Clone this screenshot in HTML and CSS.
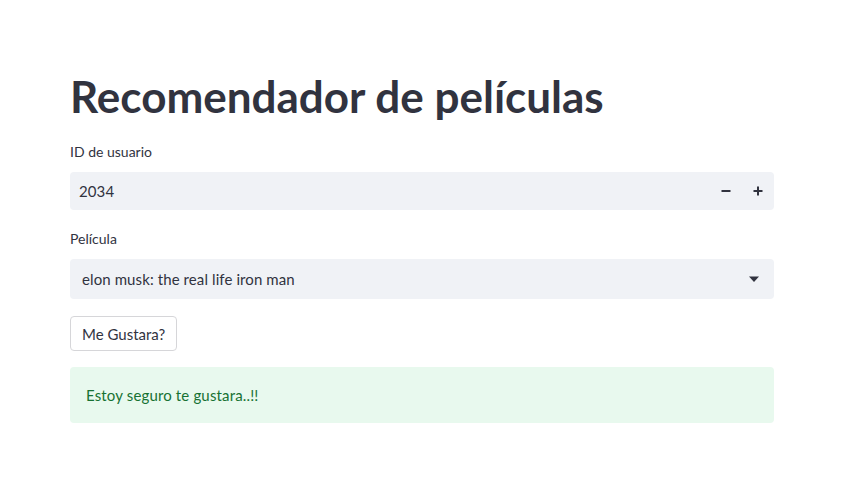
FILE: index.html
```html
<!DOCTYPE html>
<html lang="es">
<head>
<meta charset="utf-8">
<link rel="stylesheet" href="styles.css">
</head>
<body>
<main class="block">
  <h1 class="title">Recomendador de películas</h1>
  <div class="field field-number">
    <label class="label">ID de usuario</label>
    <div class="number-input">
      <span class="number-value">2034</span>
      <div class="steps">
        <span class="step">
          <svg width="10" height="10" viewBox="0 0 10 10"><rect x="0.5" y="4" width="9" height="2" fill="#31333F"/></svg>
        </span>
        <span class="step">
          <svg width="10" height="10" viewBox="0 0 10 10"><rect x="0.5" y="4" width="9" height="2" fill="#31333F"/><rect x="4" y="0.5" width="2" height="9" fill="#31333F"/></svg>
        </span>
      </div>
    </div>
  </div>
  <div class="field field-select">
    <label class="label">Película</label>
    <div class="select">
      <span class="select-value">elon musk: the real life iron man</span>
      <svg class="caret" width="12" height="8" viewBox="0 0 12 8"><path d="M1 1.5 L11 1.5 L6 7 Z" fill="#31333F"/></svg>
    </div>
  </div>
  <button class="btn">Me Gustara?</button>
  <div class="alert">Estoy seguro te gustara..!!</div>
</main>
</body>
</html>
```

FILE: styles.css
```css
html, body {
  margin: 0;
  padding: 0;
  background: #ffffff;
}
body {
  font-family: "Lato", "Open Sans", sans-serif;
  color: #31333F;
}
.block {
  width: 704px;
  margin: 0 0 0 70px;
  padding-top: 68px;
  display: flex;
  flex-direction: column;
}
.title {
  margin: 0;
  font-size: 44px;
  font-weight: 700;
  line-height: 56px;
  letter-spacing: 0;
}
.field {
  display: flex;
  flex-direction: column;
}
.field-number { margin-top: 18px; }
.field-select { margin-top: 19px; }
.label {
  font-size: 14px;
  line-height: 20px;
  height: 20px;
  margin-bottom: 10px;
}
.number-input {
  height: 38px;
  background: #f0f2f6;
  border-radius: 4px;
  display: flex;
  align-items: center;
  justify-content: space-between;
  padding-left: 9px;
}
.number-value {
  font-size: 15px;
  letter-spacing: 0.1px;
}
.steps {
  display: flex;
  height: 100%;
}
.step {
  width: 32px;
  display: flex;
  align-items: center;
  justify-content: center;
}
.select {
  height: 40px;
  background: #f0f2f6;
  border-radius: 4px;
  display: flex;
  align-items: center;
  justify-content: space-between;
  padding: 0 14px 0 12px;
}
.select-value {
  font-size: 15px;
  letter-spacing: 0.1px;
}
.btn {
  align-self: flex-start;
  margin-top: 17px;
  height: 35px;
  padding: 0 11px;
  background: #ffffff;
  border: 1px solid #d6d6d9;
  border-radius: 4px;
  font-family: inherit;
  font-size: 15px;
  color: #31333F;
}
.alert {
  margin-top: 16px;
  height: 56px;
  box-sizing: border-box;
  padding: 0 16px;
  display: flex;
  align-items: center;
  background: #e8f9ee;
  border-radius: 4px;
  color: #177233;
  font-size: 15px;
  letter-spacing: 0.15px;
}
```
